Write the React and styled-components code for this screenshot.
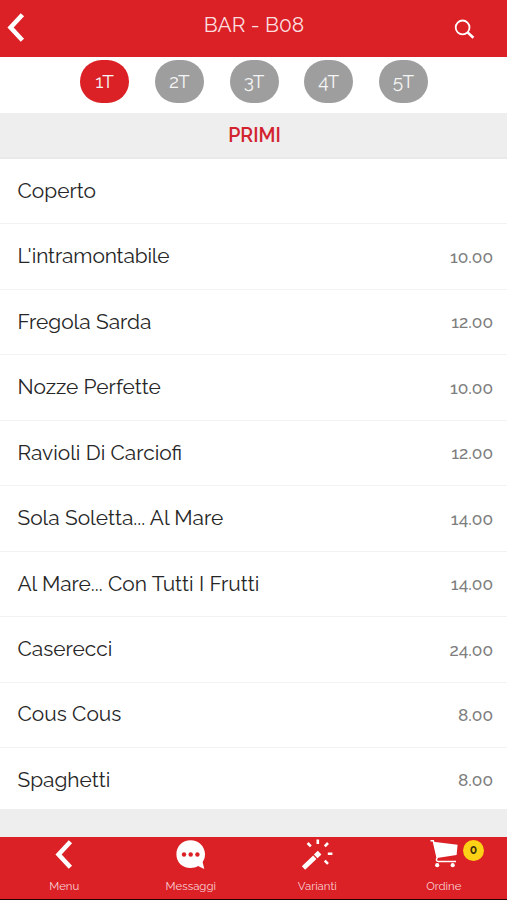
import React, { useState } from "react";
import styled, { createGlobalStyle } from "styled-components";

const GlobalStyle = createGlobalStyle`
  * {
    box-sizing: border-box;
  }

  body {
    margin: 0;
    background: #eee;
    font-family: Raleway, Lato, "Open Sans", sans-serif;
  }

  button {
    border: none;
    padding: 0;
    font: inherit;
    cursor: pointer;
  }
`;

const courses = ["1T", "2T", "3T", "4T", "5T"];

const dishes = [
  { name: "Coperto" },
  { name: "L'intramontabile", price: "10.00", tight: true },
  { name: "Fregola Sarda", price: "12.00" },
  { name: "Nozze Perfette", price: "10.00" },
  { name: "Ravioli Di Carciofi", price: "12.00" },
  { name: "Sola Soletta... Al Mare", price: "14.00" },
  { name: "Al Mare... Con Tutti I Frutti", price: "14.00" },
  { name: "Caserecci", price: "24.00" },
  { name: "Cous Cous", price: "8.00" },
  { name: "Spaghetti", price: "8.00" },
];

const BackIcon = () => (
  <svg width="20" height="32" viewBox="0 0 20 32">
    <path d="M16.4 2.8 L4.6 15.5 L16.4 28.2" fill="none" stroke="#fff" strokeWidth="4.6" />
  </svg>
);

const SearchIcon = () => (
  <svg width="22" height="22" viewBox="0 0 22 22">
    <circle cx="8.6" cy="8.4" r="6.9" fill="none" stroke="#fff" strokeWidth="1.8" />
    <path d="M13.6 13.4 L19.4 18.8" stroke="#fff" strokeWidth="2.6" />
  </svg>
);

const MessageIcon = () => (
  <svg width="32" height="32" viewBox="0 0 32 32">
    <path
      d="M15.5 1.2 C7.4 1.2 1.4 7.2 1.4 15.2 C1.4 23.2 7.4 29 15.5 29 C18.4 29 20.8 28.5 23 27.1 L29.3 29.9 L27.6 23 C29.2 20.8 30 18.2 30 15.2 C30 7.2 23.6 1.2 15.5 1.2 Z"
      fill="#fff"
    />
    <circle cx="9" cy="15.5" r="2.2" fill="#db2026" />
    <circle cx="15.7" cy="15.5" r="2.2" fill="#db2026" />
    <circle cx="22.4" cy="15.5" r="2.2" fill="#db2026" />
  </svg>
);

const WandIcon = () => (
  <svg width="32" height="32" viewBox="0 0 32 32" stroke="#fff" fill="none">
    <path d="M2.5 29 L13.8 18.3" strokeWidth="4.8" />
    <path d="M14.7 17.4 L18.6 13.7" strokeWidth="5.2" />
    <path
      d="M16.8 0.6 V5 M6.6 4 L9.8 7.4 M27 4 L23.8 7.4 M26.8 14.8 H31.4 M23.8 21.6 L27 24.8"
      strokeWidth="2.6"
    />
  </svg>
);

const CartIcon = () => (
  <svg width="30" height="30" viewBox="0 0 30 30">
    <path d="M4.2 2.8 L28.6 5.8 L27.6 16 L8 19 Z" fill="#fff" />
    <path
      d="M1.5 1.8 H4.3 L8.2 18.8 C6.9 20.5 7.1 22.3 9.2 22.5 H27"
      fill="none"
      stroke="#fff"
      strokeWidth="1.5"
    />
    <circle cx="8.2" cy="26.2" r="2.1" fill="#fff" />
    <circle cx="23.7" cy="26.2" r="2.1" fill="#fff" />
  </svg>
);

export default function App() {
  const [course, setCourse] = useState("1T");

  return (
    <>
      <GlobalStyle />
      <Screen>
        <Header>
          <BackButton aria-label="Indietro">
            <BackIcon />
          </BackButton>
          <Title>BAR - B08</Title>
          <SearchButton aria-label="Cerca">
            <SearchIcon />
          </SearchButton>
        </Header>

        <Courses>
          {courses.map((item) => (
            <Course key={item} $active={item === course} onClick={() => setCourse(item)}>
              {item}
            </Course>
          ))}
        </Courses>

        <Section>PRIMI</Section>

        <List>
          {dishes.map((dish) => (
            <Dish key={dish.name}>
              <Name $tight={dish.tight}>{dish.name}</Name>
              {dish.price && <Price>{dish.price}</Price>}
            </Dish>
          ))}
        </List>

        <Footer>
          <Tab>
            <BackIcon />
            <Label>Menu</Label>
          </Tab>
          <Tab>
            <MessageIcon />
            <Label>Messaggi</Label>
          </Tab>
          <Tab>
            <WandIcon />
            <Label>Varianti</Label>
          </Tab>
          <Tab>
            <CartIcon />
            <Badge>0</Badge>
            <Label>Ordine</Label>
          </Tab>
        </Footer>
      </Screen>
    </>
  );
}

const Screen = styled.div`
  display: flex;
  flex-direction: column;
  height: 900px;
  background: #eee;
`;

const Header = styled.header`
  display: grid;
  grid-template-columns: 60px 1fr 60px;
  height: 57px;
  flex: none;
  background: #db2026;
  color: #fff;
`;

const BackButton = styled.button`
  display: flex;
  padding: 12px 0 0 6px;
  background: none;
`;

const Title = styled.h1`
  margin: 0;
  padding-left: 1px;
  font-size: 21px;
  font-weight: 400;
  line-height: 50px;
  text-align: center;
  color: #fbdedf;
`;

const SearchButton = styled.button`
  display: flex;
  padding: 19px 0 0 7px;
  background: none;
`;

const Courses = styled.div`
  display: flex;
  justify-content: center;
  gap: 25.7px;
  height: 56px;
  flex: none;
  padding: 3px 0 0 1px;
  background: #fff;
`;

const Course = styled.button`
  width: 49px;
  height: 43px;
  padding-bottom: 2px;
  border-radius: 22px;
  background: ${(props) => (props.$active ? "#db2026" : "#9e9e9e")};
  color: #f5f5f5;
  font-size: 19px;
`;

const Section = styled.h2`
  height: 46px;
  flex: none;
  margin: 0;
  padding-left: 2px;
  border-bottom: 2px solid #e9e9e9;
  color: #d2232f;
  font-size: 19.5px;
  font-weight: 600;
  line-height: 45px;
  text-align: center;
`;

const List = styled.ul`
  margin: 0;
  padding: 0;
  list-style: none;
`;

const Dish = styled.li`
  display: flex;
  justify-content: space-between;
  align-items: center;
  height: 65.45px;
  padding: 0 14px 1.5px 17.5px;
  border-bottom: 1px solid #f2f2f2;
  background: #fff;

  &:last-child {
    height: 61px;
    padding-top: 2px;
    padding-bottom: 0;
    border-bottom: none;
  }
`;

const Name = styled.span`
  color: #262626;
  font-size: 20.9px;
  letter-spacing: ${(props) => (props.$tight ? "-0.15px" : "normal")};
  white-space: nowrap;
`;

const Price = styled.span`
  padding-top: 2px;
  color: #7d7d7d;
  font-size: 17.3px;
  font-weight: 500;
`;

const Footer = styled.footer`
  display: grid;
  grid-template-columns: repeat(4, 1fr);
  height: 63px;
  margin-top: auto;
  padding-left: 1px;
  border-bottom: 1px solid #200;
  background: #db2026;
`;

const Tab = styled.button`
  position: relative;
  display: flex;
  flex-direction: column;
  align-items: center;
  justify-content: space-between;
  padding: 2px 0 6px;
  background: none;
`;

const Label = styled.span`
  color: #f9d2d4;
  font-size: 11.4px;
  line-height: 14px;
`;

const Badge = styled.span`
  position: absolute;
  top: 3px;
  left: 82.5px;
  width: 21px;
  height: 21px;
  border-radius: 50%;
  background: #fdd116;
  color: #40310a;
  font-size: 12px;
  font-weight: 700;
  line-height: 20px;
  text-align: center;
`;
